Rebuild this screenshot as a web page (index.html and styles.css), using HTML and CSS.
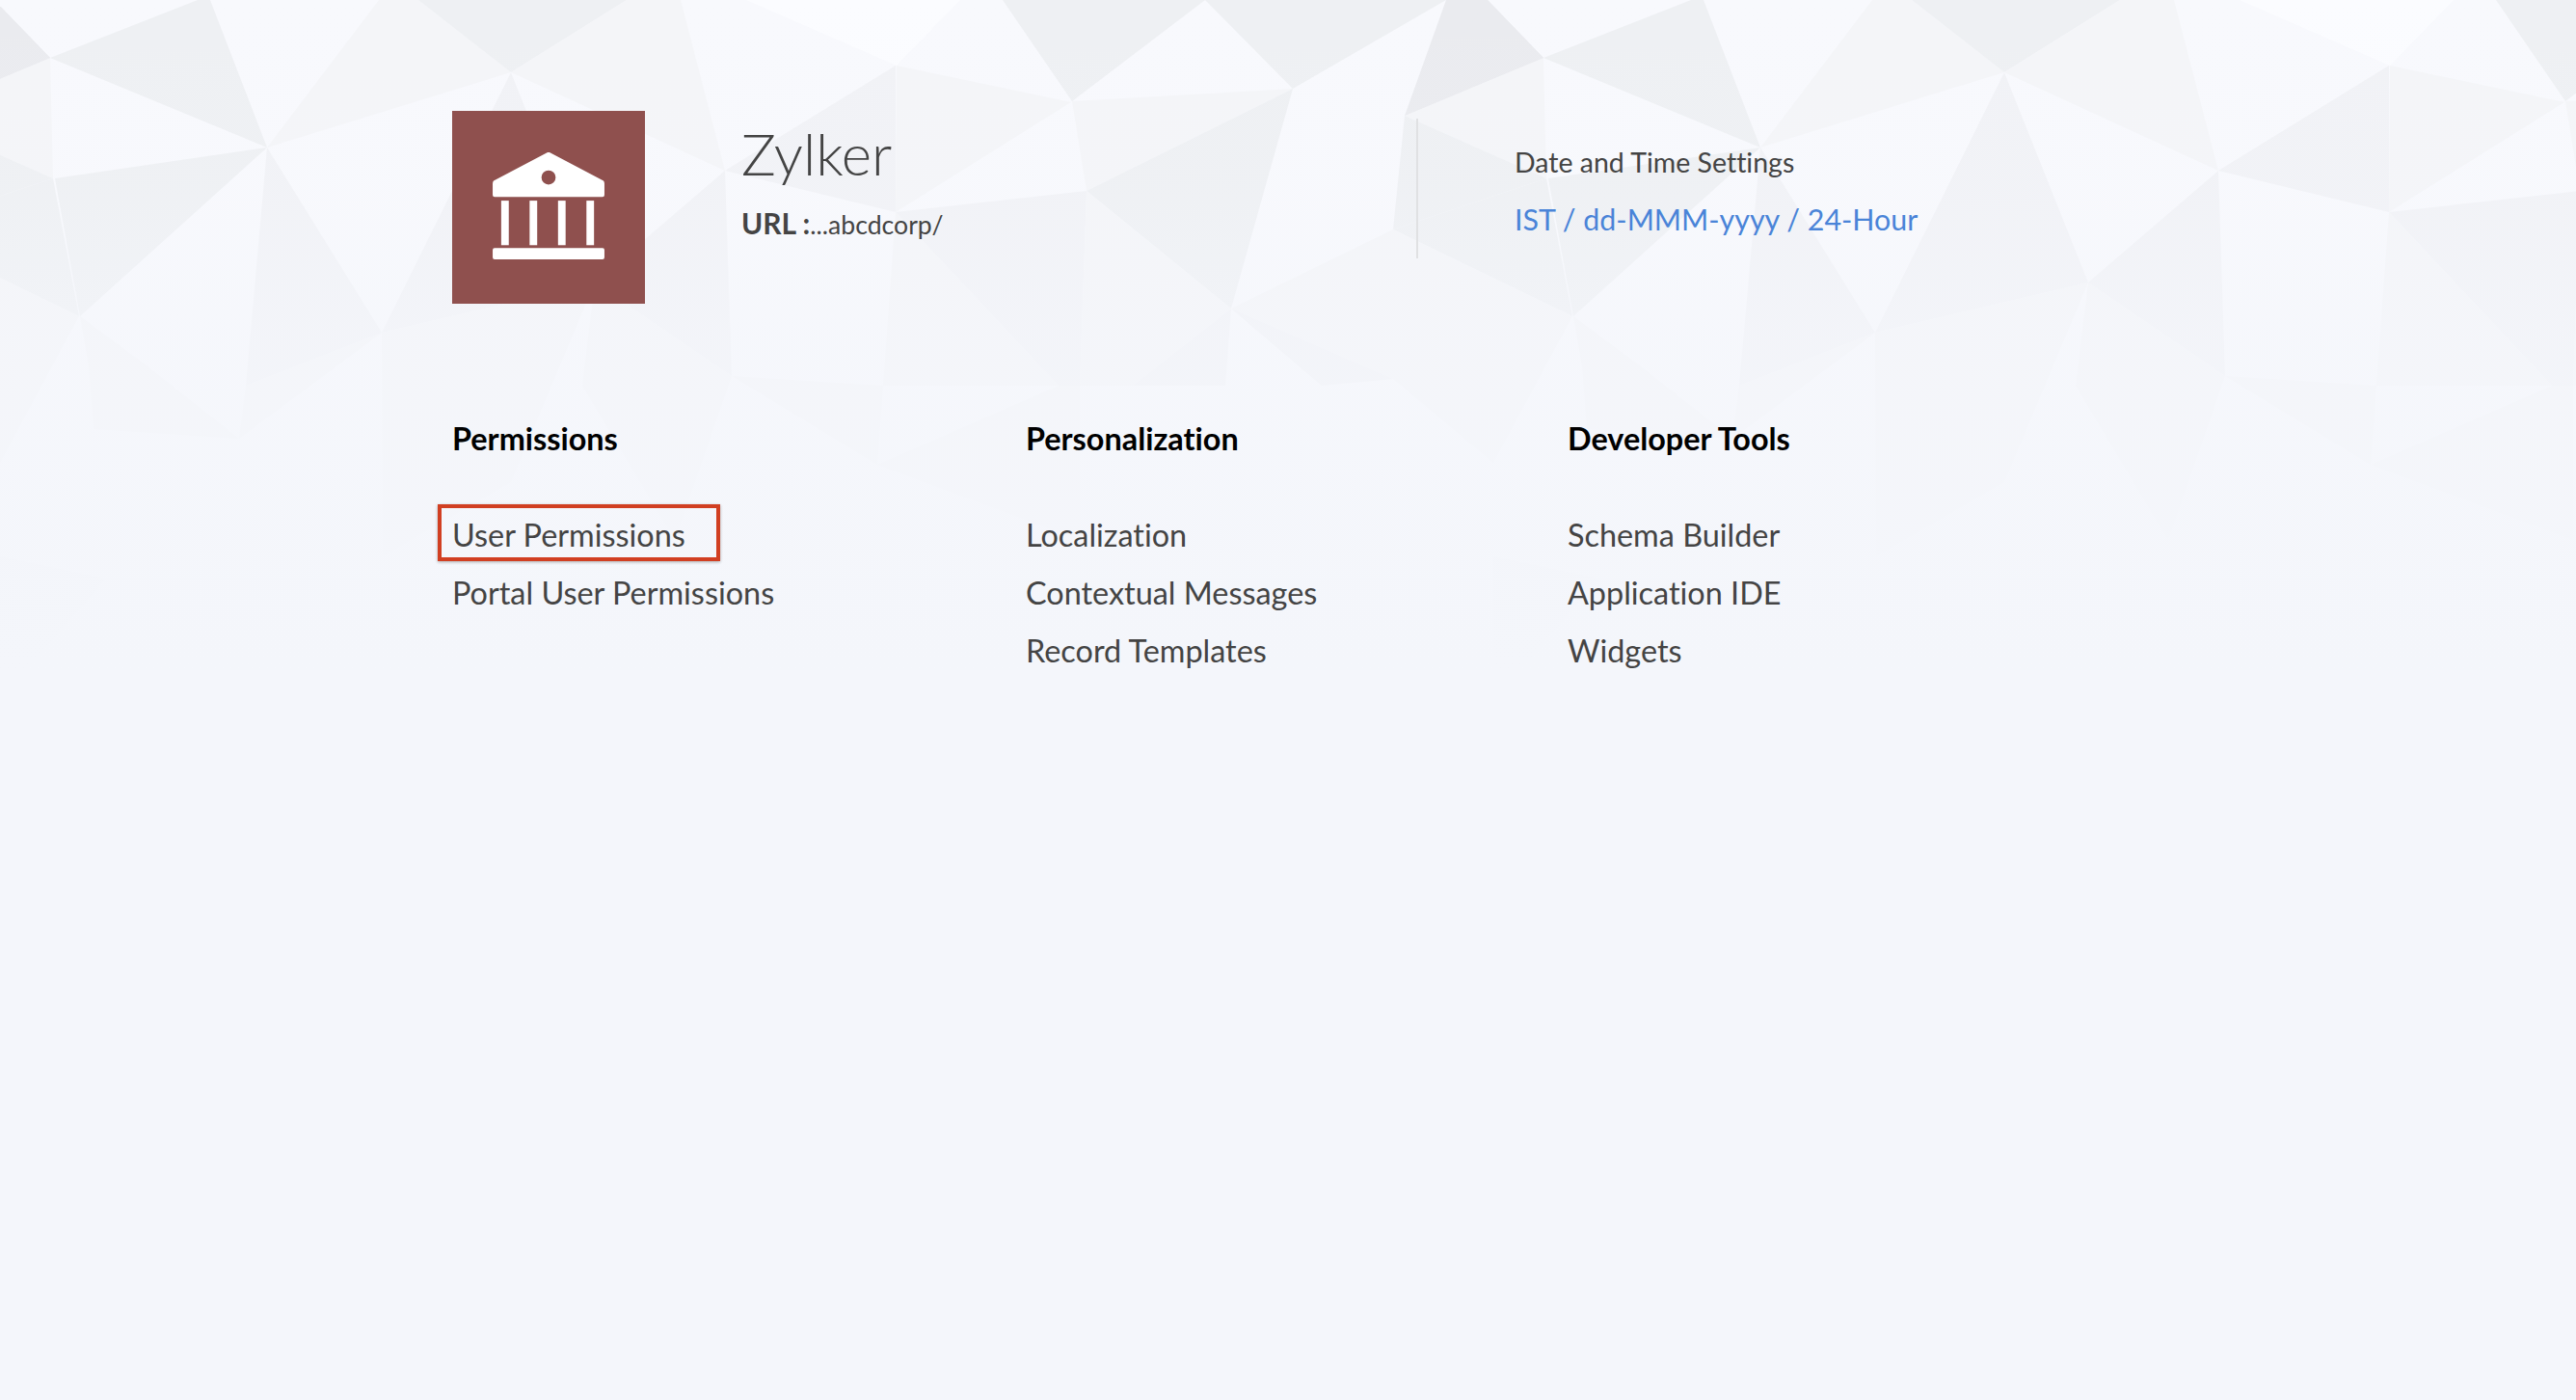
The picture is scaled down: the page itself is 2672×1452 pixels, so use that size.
FILE: index.html
```html
<!DOCTYPE html>
<html lang="en">
<head>
    <meta charset="UTF-8">
    <title>Zylker - Settings</title>
    <link rel="stylesheet" href="styles.css">
</head>
<body>
    <!-- low poly backdrop, one tile repeated -->
    <svg class="backdrop" width="2672" height="760" viewBox="0 0 2672 760" aria-hidden="true">
        <defs>
            <linearGradient id="fade" x1="0" y1="0" x2="0" y2="1">
                <stop offset="0" stop-color="#f4f6fb" stop-opacity="0"/>
                <stop offset="0.25" stop-color="#f4f6fb" stop-opacity="0.12"/>
                <stop offset="0.45" stop-color="#f4f6fb" stop-opacity="0.55"/>
                <stop offset="0.7" stop-color="#f4f6fb" stop-opacity="0.85"/>
                <stop offset="0.92" stop-color="#f4f6fb" stop-opacity="1"/>
            </linearGradient>
            <g id="tile">
                <polygon class="s1" points="-6,0 52,60 -92,120"/>
                <polygon class="s2" points="52,60 205,0 218,0 277,153"/>
                <polygon class="s4" points="393,0 434,0 530,75 277,153"/>
                <polygon class="s2" points="434,0 650,0 530,75"/>
                <polygon class="s4" points="650,0 706,0 752,177 530,75"/>
                <polygon class="s6" points="774,0 996,0 930,68"/>
                <polygon class="s2" points="1040,0 1250,0 1112,105"/>
                <polygon class="s2" points="1250,0 1500,0 1341,92"/>
                <polygon class="s1" points="1500,0 1543,0 1601,60 1457,120"/>
                <polygon class="s4" points="1457,120 1601,60 1604,185"/>
                <polygon class="s2" points="1457,120 1604,185 1445,238"/>
                <polygon class="s2" points="1445,238 1604,185 1631,328"/>
                <polygon class="s2" points="57,185 277,153 83,328"/>
                <polygon class="s3" points="277,153 396,345 255,400"/>
                <polygon class="s3" points="530,75 617,293 396,345"/>
                <polygon class="s3" points="752,177 617,293 759,390"/>
                <polygon class="s3" points="752,177 929,68 929,220"/>
                <polygon class="s4" points="930,68 1111,106 929,220"/>
                <polygon class="s4" points="1112,105 1341,92 1127,198"/>
                <polygon class="s2" points="1127,198 1341,92 1277,320"/>
                <polygon class="s3" points="929,220 1127,198 1120,400 1098,400"/>
                <polygon class="s4" points="929,220 1098,400 916,400"/>
                <polygon class="s4" points="1127,198 1277,320 1175,400 1120,400"/>
                <polygon class="s3" points="1277,320 1271,400 1175,400"/>
                <polygon class="s4" points="1277,320 1445,238 1445,393"/>
                <polygon class="s3" points="1277,320 1371,400 1445,393"/>
                <polygon class="s4" points="1445,393 1445,238 1631,328 1549,480"/>
                <polygon class="s4" points="396,345 248,455 255,400"/>
                <polygon class="s4" points="83,328 92,380 97,445 248,455 153,380"/>
                <polygon class="s4" points="396,345 617,293 530,500 397,577"/>
                <polygon class="s3" points="0,577 110,600 17,707 0,720"/>
                <polygon class="s4" points="759,390 916,400 910,482"/>
                <polygon class="s4" points="1098,400 1120,400 1120,560 910,482"/>
                <polygon class="s4" points="617,293 759,390 700,560 604,400"/>
            </g>
        </defs>
        <rect class="s5" width="2672" height="760"/>
        <use href="#tile" x="-1549"/>
        <use href="#tile"/>
        <use href="#tile" x="1549"/>
        <rect width="2672" height="760" fill="url(#fade)"/>
    </svg>

    <main class="page">
        <section class="org">
            <div class="org-logo">
                <svg width="116" height="112" viewBox="0 0 118 114" fill="#fff">
                    <path d="M60 0 L117 30 Q118 31 118 33 V45 Q118 47 116 47 H2 Q0 47 0 45 V33 Q0 31 1 30 L58 0 Q59 -.5 60 0 Z M59 19 A7.5 7.5 0 1 0 59 34 A7.5 7.5 0 1 0 59 19 Z" fill-rule="evenodd"/>
                    <rect x="9" y="51" width="8" height="47"/>
                    <rect x="39" y="51" width="8" height="47"/>
                    <rect x="69" y="51" width="8" height="47"/>
                    <rect x="99" y="51" width="8" height="47"/>
                    <rect x="0" y="101" width="118" height="12" rx="2"/>
                </svg>
            </div>
            <div class="org-info">
                <h1 class="org-name">Zylker</h1>
                <p class="org-url"><b>URL :</b><span class="org-path">...abcdcorp/</span></p>
            </div>
            <div class="org-date">
                <p class="date-label">Date and Time Settings</p>
                <a class="date-value" href="#">IST / dd-MMM-yyyy / 24-Hour</a>
            </div>
        </section>

        <section class="groups">
            <div class="group group-permissions">
                <h2>Permissions</h2>
                <ul>
                    <li class="marked">User Permissions</li>
                    <li>Portal User Permissions</li>
                </ul>
            </div>
            <div class="group group-personal">
                <h2>Personalization</h2>
                <ul>
                    <li>Localization</li>
                    <li>Contextual Messages</li>
                    <li>Record Templates</li>
                </ul>
            </div>
            <div class="group">
                <h2>Developer Tools</h2>
                <ul>
                    <li>Schema Builder</li>
                    <li>Application IDE</li>
                    <li>Widgets</li>
                </ul>
            </div>
        </section>
    </main>
</body>
</html>
```

FILE: styles.css
```css
html, body {
    margin: 0;
    height: 100%;
}
body {
    background-color: #f4f6fb;
    font-family: Lato, "Open Sans", sans-serif;
    font-variant-ligatures: none;
    color: #444;
    overflow: hidden;
}
.backdrop {
    position: absolute;
    top: 0;
    left: 0;
    z-index: -1;
}
.s1 { fill: #eaebef; }
.s2 { fill: #eef0f3; }
.s3 { fill: #f1f2f6; }
.s4 { fill: #f4f5f8; }
.s5 { fill: #f8f9fd; }
.s6 { fill: #fbfcff; }

.page {
    padding: 115px 0 0 469px;
}
.org {
    display: flex;
}
.org-logo {
    width: 200px;
    height: 200px;
    background-color: #8f504e;
    display: flex;
    justify-content: center;
    padding-top: 43px;
    box-sizing: border-box;
}
.org-info {
    width: 700px;
    margin-left: 100px;
    padding-top: 8px;
}
.org-name {
    margin: 0;
    font-size: 60px;
    font-weight: 300;
    line-height: 72px;
}
.org-url {
    margin: 18px 0 0;
    font-size: 30px;
    line-height: 36px;
}
.org-url b {
    font-weight: 700;
}
.org-path {
    font-size: 26.6px;
}
.org-date {
    height: 145px;
    margin-top: 8px;
    padding: 27px 0 0 100px;
    border-left: 2px solid #e0e1e3;
    box-sizing: border-box;
}
.date-label {
    margin: 0;
    font-size: 28.5px;
    line-height: 36px;
}
.date-value {
    display: block;
    margin-top: 22px;
    font-size: 30.4px;
    line-height: 38px;
    color: #4a84d8;
    text-decoration: none;
}

.groups {
    display: flex;
    margin-top: 120px;
}
.group-permissions {
    width: 595px;
}
.group-personal {
    width: 562px;
}
.group h2 {
    margin: 0;
    font-size: 32.4px;
    font-weight: 700;
    line-height: 40px;
    color: #000;
}
.group ul {
    list-style: none;
    margin: 50px 0 0;
    padding: 0;
}
.group li {
    position: relative;
    font-size: 32.4px;
    line-height: 60px;
}
.marked::after {
    content: "";
    position: absolute;
    top: -2px;
    left: -15px;
    width: 285px;
    height: 51px;
    border: 4px solid #d13f22;
    box-shadow: 0 1px 3px rgba(0, 0, 0, 0.3);
}
```
